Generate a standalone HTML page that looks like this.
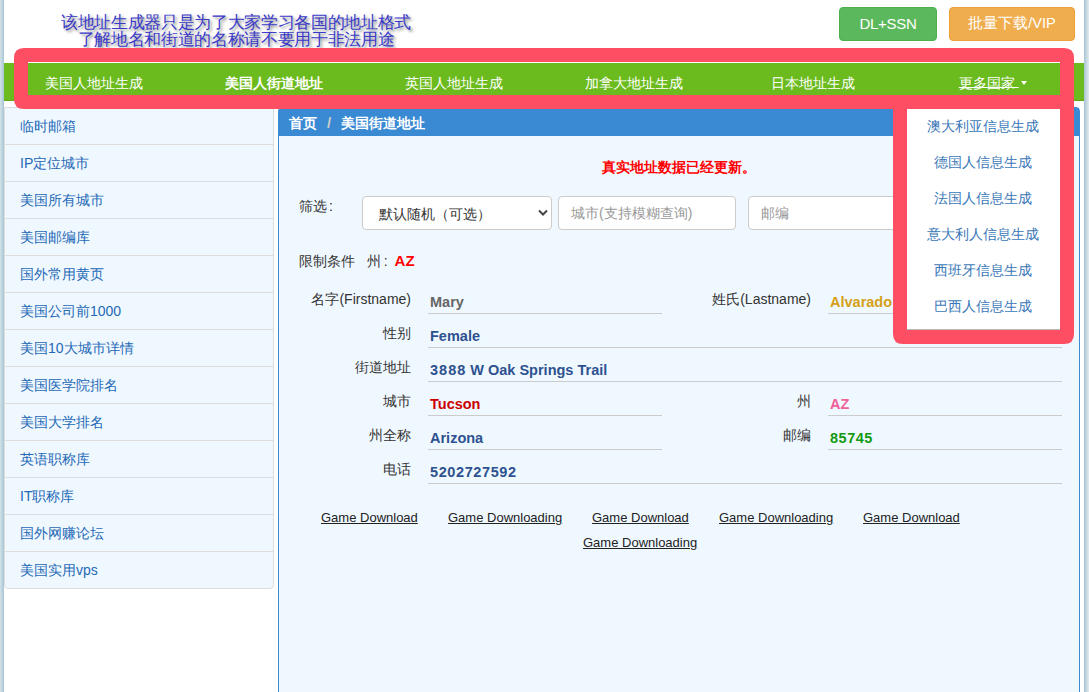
<!DOCTYPE html>
<html><head><meta charset="utf-8">
<style>
*{box-sizing:border-box;margin:0;padding:0}
html,body{width:1089px;height:692px;overflow:hidden;background:#fff}
body{position:relative;font-family:"Liberation Sans",sans-serif;font-size:14px;color:#333}
.a{position:absolute;white-space:nowrap}
#lbar{left:0;top:0;width:4px;height:692px;background:linear-gradient(to right,#d4e2ea,#a7c5d2)}
#rbar{left:1084px;top:0;width:5px;height:692px;background:linear-gradient(to right,#a7c3d1,#e2ebf0)}
#h1{left:0;top:13.5px;width:472px;text-align:center;font-family:"Liberation Serif",serif;font-weight:normal;font-size:17px;letter-spacing:-0.33px;line-height:17.5px;color:#3a3ac8;text-shadow:2px 2px 3px #8a8a8a}
.btn{height:34px;top:7px;border-radius:4px;color:#fff;font-size:15.5px;line-height:34px;text-align:center}
#b1{left:839px;width:98px;background:#5cb85c;border:1px solid #4cae4c;line-height:31px;font-size:15px;letter-spacing:-0.3px}
#b2{left:949px;width:126px;background:#f0ad4e;border:1px solid #eea236;line-height:31px;font-size:14.6px}
#nav{left:4px;top:63px;width:1080px;height:38px;background:#6cbb1e;border-bottom:1px solid #5ea915}
.ni{top:1.5px;width:180px;height:37px;line-height:37px;text-align:center;color:#fff;font-size:14px}
#side{left:4px;top:107px;width:270px;height:482px;background:#f0f8ff;border:1px solid #ddd;border-radius:0 0 4px 4px}
.si{left:0;width:268px;height:37px;border-top:1px solid #ddd;color:#2469b6;padding-left:15px;line-height:36px}
#panel{left:278px;top:107px;width:802px;height:600px;background:#f0f8ff;border:1px solid #3a89d3;border-radius:4px 4px 0 0}
#ph{left:0;top:0;width:800px;height:28px;background:#3a89d3;color:#fff;font-weight:bold;line-height:29.5px;padding-left:10px}
.lab{color:#333;text-align:right;width:200px}
.val{font-weight:bold;font-size:14.5px}
.ul{height:1px;background:#ccc}
.gd{font-family:"Liberation Sans",sans-serif;font-size:13px;color:#222;text-decoration:underline}
#dd{left:907px;top:109px;width:153px;height:221px;background:#fff;border-bottom:1px solid #bbb}
.di{left:-1px;width:153px;padding-top:0.5px;text-align:center;color:#3a78b8;font-size:14px}
</style></head><body>
<div id="lbar" class="a"></div>
<div id="rbar" class="a"></div>
<div id="h1" class="a">该地址生成器只是为了大家学习各国的地址格式<br>了解地名和街道的名称请不要用于非法用途</div>
<div id="b1" class="a btn">DL+SSN</div>
<div id="b2" class="a btn">批量下载/VIP</div>

<div id="nav" class="a">
  <div class="a ni" style="left:0">美国人地址生成</div>
  <div class="a ni" style="left:180px;font-weight:bold">美国人街道地址</div>
  <div class="a ni" style="left:360px">英国人地址生成</div>
  <div class="a ni" style="left:540px">加拿大地址生成</div>
  <div class="a ni" style="left:719px">日本地址生成</div>
  <div class="a ni" style="left:900px;padding-right:2px"><span style="text-decoration:underline;text-underline-offset:-0.5px">更多国家 </span><span style="display:inline-block;width:0;height:0;border-left:3.5px solid transparent;border-right:3.5px solid transparent;border-top:4px solid #fff;vertical-align:middle;position:relative;top:-1px;margin-left:2.5px"></span></div>
</div>

<div id="side" class="a">
  <div class="a si" style="top:0;border-top:0">临时邮箱</div>
  <div class="a si" style="top:36px">IP定位城市</div>
  <div class="a si" style="top:73px">美国所有城市</div>
  <div class="a si" style="top:110px">美国邮编库</div>
  <div class="a si" style="top:147px">国外常用黄页</div>
  <div class="a si" style="top:184px">美国公司前1000</div>
  <div class="a si" style="top:221px">美国10大城市详情</div>
  <div class="a si" style="top:258px">美国医学院排名</div>
  <div class="a si" style="top:295px">美国大学排名</div>
  <div class="a si" style="top:332px">英语职称库</div>
  <div class="a si" style="top:369px">IT职称库</div>
  <div class="a si" style="top:406px">国外网赚论坛</div>
  <div class="a si" style="top:443px">美国实用vps</div>
</div>

<div id="panel" class="a">
  <div id="ph" class="a">首页 <span style="color:#ccc;padding:0 6px 0 6px;font-size:15px">/</span> 美国街道地址</div>
</div>

<div class="a" style="left:602px;top:158.5px;color:#f00;font-weight:bold">真实地址数据已经更新。</div>
<div class="a" style="left:299px;top:198px">筛选<span style="padding-left:2px">:</span></div>
<div class="a" style="left:362px;top:196px;width:190px;height:34px;background:#fff;border:1px solid #ccc;border-radius:4px"></div>
<div class="a" style="left:379px;top:206px">默认随机（可选）</div>
<svg class="a" style="left:536px;top:207px" width="14" height="12"><path d="M3 3.5 L7 7.5 L11 3.5" fill="none" stroke="#444" stroke-width="2"/></svg>
<div class="a" style="left:558px;top:196px;width:178px;height:34px;background:#fff;border:1px solid #ccc;border-radius:4px"></div>
<div class="a" style="left:571px;top:205px;color:#999">城市(支持模糊查询)</div>
<div class="a" style="left:748px;top:196px;width:178px;height:34px;background:#fff;border:1px solid #ccc;border-radius:4px"></div>
<div class="a" style="left:761px;top:205px;color:#999">邮编</div>

<div class="a" style="left:299px;top:252px">限制条件 &nbsp; 州<span style="padding:0 7px 0 3px">:</span><b style="color:#f00;font-size:15px">AZ</b></div>

<!-- rows -->
<div class="a lab" style="left:211px;top:291px">名字(Firstname)</div>
<div class="a val" style="left:430px;top:294px;color:#666">Mary</div>
<div class="a ul" style="left:428px;top:313px;width:234px"></div>
<div class="a lab" style="left:611px;top:291px">姓氏(Lastname)</div>
<div class="a val" style="left:830px;top:294px;color:#d4a017">Alvarado</div>
<div class="a ul" style="left:828px;top:313px;width:234px"></div>

<div class="a lab" style="left:211px;top:325px">性别</div>
<div class="a val" style="left:430px;top:328px;color:#2d528f">Female</div>
<div class="a ul" style="left:428px;top:347px;width:634px"></div>

<div class="a lab" style="left:211px;top:359px">街道地址</div>
<div class="a val" style="left:430px;top:362px;color:#2d528f"><span style="letter-spacing:1px">3888</span> W Oak Springs Trail</div>
<div class="a ul" style="left:428px;top:381px;width:634px"></div>

<div class="a lab" style="left:211px;top:393px">城市</div>
<div class="a val" style="left:430px;top:396px;color:#c00">Tucson</div>
<div class="a ul" style="left:428px;top:415px;width:234px"></div>
<div class="a lab" style="left:611px;top:393px">州</div>
<div class="a val" style="left:830px;top:396px;color:#f06098">AZ</div>
<div class="a ul" style="left:828px;top:415px;width:234px"></div>

<div class="a lab" style="left:211px;top:427px">州全称</div>
<div class="a val" style="left:430px;top:430px;color:#2d528f">Arizona</div>
<div class="a ul" style="left:428px;top:449px;width:234px"></div>
<div class="a lab" style="left:611px;top:427px">邮编</div>
<div class="a val" style="left:830px;top:430px;color:#129a12"><span style="letter-spacing:0.5px">85745</span></div>
<div class="a ul" style="left:828px;top:449px;width:234px"></div>

<div class="a lab" style="left:211px;top:461px">电话</div>
<div class="a val" style="left:430px;top:464px;color:#2d528f"><span style="letter-spacing:0.6px">5202727592</span></div>
<div class="a ul" style="left:428px;top:483px;width:634px"></div>

<div class="a gd" style="left:321px;top:510px">Game Download</div>
<div class="a gd" style="left:448px;top:510px">Game Downloading</div>
<div class="a gd" style="left:592px;top:510px">Game Download</div>
<div class="a gd" style="left:719px;top:510px">Game Downloading</div>
<div class="a gd" style="left:863px;top:510px">Game Download</div>
<div class="a gd" style="left:583px;top:535px">Game Downloading</div>

<div id="dd" class="a">
  <div class="a di" style="top:8px">澳大利亚信息生成</div>
  <div class="a di" style="top:44px">德国人信息生成</div>
  <div class="a di" style="top:80px">法国人信息生成</div>
  <div class="a di" style="top:116px">意大利人信息生成</div>
  <div class="a di" style="top:152px">西班牙信息生成</div>
  <div class="a di" style="top:188px">巴西人信息生成</div>
</div>

<svg class="a" style="left:0;top:0" width="1089" height="692">
<path fill="#fe4e63" fill-rule="evenodd" d="M24 48 H1064 Q1074 48 1074 58 V334 Q1074 344 1064 344 H903 Q893 344 893 334 V109 H24 Q14 109 14 99 V58 Q14 48 24 48 Z M28 62 H1060 V95 H28 Z M907 109 H1060 V330 H907 Z"/>
</svg>
</body></html>
